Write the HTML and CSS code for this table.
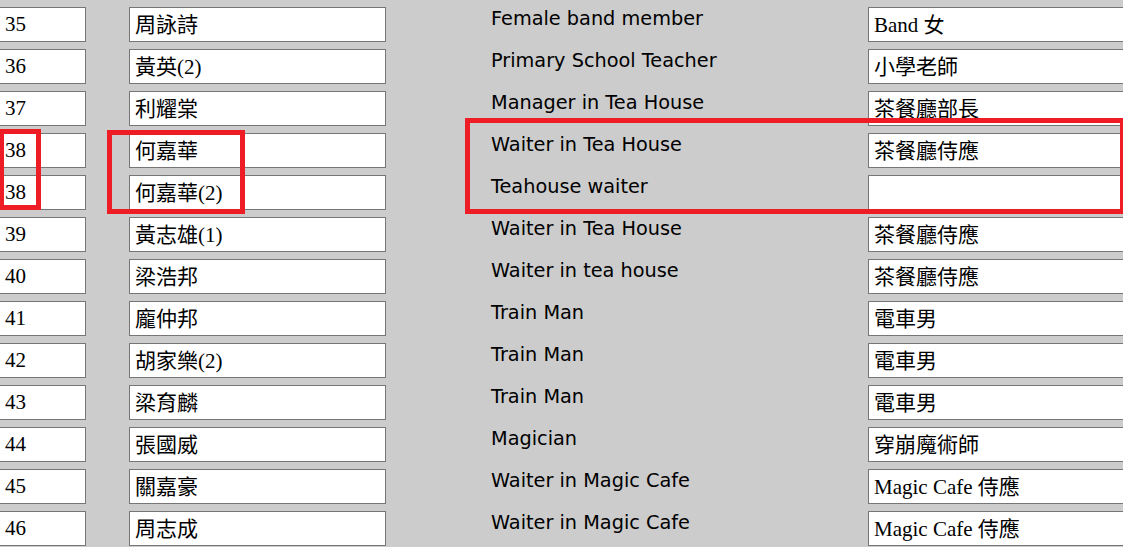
FILE: index.html
```html
<!DOCTYPE html>
<html lang="zh-Hant">
<head>
<meta charset="utf-8">
<title>Cast list</title>
<link rel="stylesheet" href="styles.css">
</head>
<body>
<div class="sheet">
  <div class="grid">
    <div class="cell"><input class="field num" value="35"></div>
    <div class="cell"><input class="field name" value="周詠詩"></div>
    <div class="label">Female band member</div>
    <div class="cell"><input class="field role" value="Band 女"></div>

    <div class="cell"><input class="field num" value="36"></div>
    <div class="cell"><input class="field name" value="黃英(2)"></div>
    <div class="label">Primary School Teacher</div>
    <div class="cell"><input class="field role" value="小學老師"></div>

    <div class="cell"><input class="field num" value="37"></div>
    <div class="cell"><input class="field name" value="利耀棠"></div>
    <div class="label">Manager in Tea House</div>
    <div class="cell"><input class="field role" value="茶餐廳部長"></div>

    <div class="cell"><input class="field num" value="38"></div>
    <div class="cell"><input class="field name" value="何嘉華"></div>
    <div class="label">Waiter in Tea House</div>
    <div class="cell"><input class="field role" value="茶餐廳侍應"></div>

    <div class="cell"><input class="field num" value="38"></div>
    <div class="cell"><input class="field name" value="何嘉華(2)"></div>
    <div class="label">Teahouse waiter</div>
    <div class="cell"><input class="field role" value=""></div>

    <div class="cell"><input class="field num" value="39"></div>
    <div class="cell"><input class="field name" value="黃志雄(1)"></div>
    <div class="label">Waiter in Tea House</div>
    <div class="cell"><input class="field role" value="茶餐廳侍應"></div>

    <div class="cell"><input class="field num" value="40"></div>
    <div class="cell"><input class="field name" value="梁浩邦"></div>
    <div class="label">Waiter in tea house</div>
    <div class="cell"><input class="field role" value="茶餐廳侍應"></div>

    <div class="cell"><input class="field num" value="41"></div>
    <div class="cell"><input class="field name" value="龐仲邦"></div>
    <div class="label">Train Man</div>
    <div class="cell"><input class="field role" value="電車男"></div>

    <div class="cell"><input class="field num" value="42"></div>
    <div class="cell"><input class="field name" value="胡家樂(2)"></div>
    <div class="label">Train Man</div>
    <div class="cell"><input class="field role" value="電車男"></div>

    <div class="cell"><input class="field num" value="43"></div>
    <div class="cell"><input class="field name" value="梁育麟"></div>
    <div class="label">Train Man</div>
    <div class="cell"><input class="field role" value="電車男"></div>

    <div class="cell"><input class="field num" value="44"></div>
    <div class="cell"><input class="field name" value="張國威"></div>
    <div class="label">Magician</div>
    <div class="cell"><input class="field role" value="穿崩魔術師"></div>

    <div class="cell"><input class="field num" value="45"></div>
    <div class="cell"><input class="field name" value="關嘉豪"></div>
    <div class="label">Waiter in Magic Cafe</div>
    <div class="cell"><input class="field role" value="Magic Cafe 侍應"></div>

    <div class="cell"><input class="field num" value="46"></div>
    <div class="cell"><input class="field name" value="周志成"></div>
    <div class="label">Waiter in Magic Cafe</div>
    <div class="cell"><input class="field role" value="Magic Cafe 侍應"></div>
  </div>

  <div class="mark mark-num"></div>
  <div class="mark mark-name"></div>
  <div class="mark mark-role"></div>
</div>
</body>
</html>
```
FILE: styles.css
```css
html, body {
  margin: 0;
  padding: 0;
  background: #cccccc;
  overflow: hidden;
}

.sheet {
  position: relative;
  width: 1123px;
  height: 547px;
  overflow: hidden;
}

.grid {
  display: grid;
  grid-template-columns: 130px 361px 378px 300px;
  grid-auto-rows: 35px;
  row-gap: 7px;
  padding-top: 7px;
  margin-left: -1px;
}

.cell {
  display: flex;
}

.field {
  box-sizing: border-box;
  height: 35px;
  margin: 0;
  padding: 0 5px;
  border: 1px solid #767676;
  border-radius: 0;
  background: #ffffff;
  color: #000000;
  font-family: "Liberation Serif", "Noto Sans CJK TC", serif;
  font-size: 21px;
  outline: none;
}

.num {
  width: 87px;
}

.name {
  width: 257px;
  padding-bottom: 4px;
}

.role {
  width: 300px;
  padding-bottom: 4px;
}

.label {
  padding-top: 1px;
  padding-left: 1px;
  font-family: "DejaVu Sans", sans-serif;
  font-size: 19.3px;
  line-height: 22px;
  color: #000000;
}

.mark {
  position: absolute;
  box-sizing: border-box;
  border: 5px solid #ee1c25;
}

.mark-num {
  left: -1px;
  top: 129px;
  width: 42px;
  height: 81px;
}

.mark-name {
  left: 107px;
  top: 130px;
  width: 138px;
  height: 84px;
}

.mark-role {
  left: 465px;
  top: 118px;
  width: 660px;
  height: 96px;
}
```
